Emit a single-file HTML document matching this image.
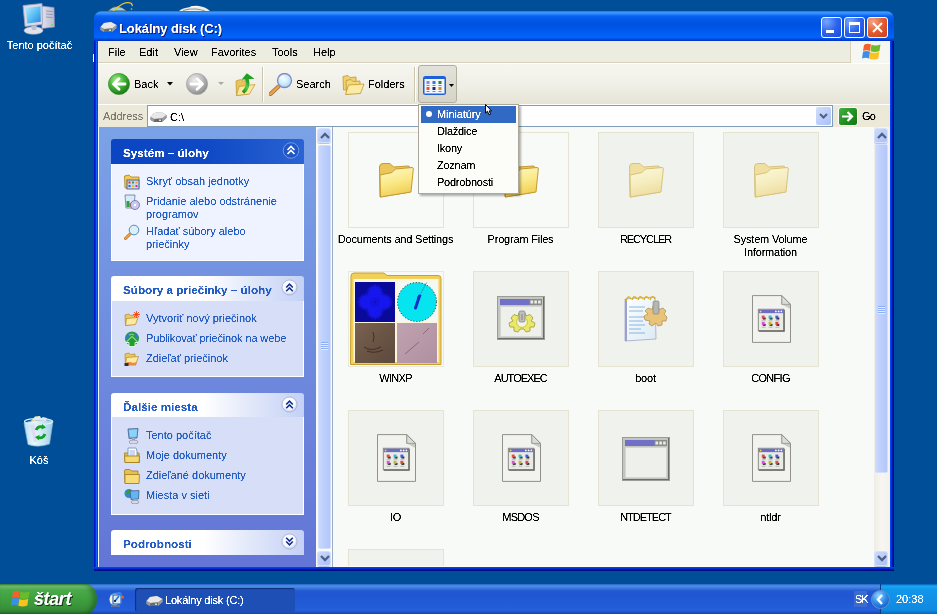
<!DOCTYPE html>
<html><head><meta charset="utf-8">
<style>
*{box-sizing:border-box;margin:0;padding:0}
html,body{width:937px;height:614px;overflow:hidden;background:#004E98;font-family:"Liberation Sans",sans-serif;font-size:11px;color:#000}
.a{position:absolute}
.t{white-space:nowrap}
.t,.lnk,.lbl,.dtxt{filter:url(#cr)}
#title{left:94px;top:11px;width:800px;height:30px;border-radius:8px 8px 0 0;background:linear-gradient(#1F6EF0 0,#3C96FF 1.5px,#2E86FC 3px,#0A62F0 5px,#0058E8 9px,#0051DF 45%,#005CF0 70%,#0064F8 88%,#0046D8 95%,#0030C0 100%)}
#frameL{left:94px;top:41px;width:4px;height:530px;background:linear-gradient(90deg,#0016C8 0,#0016C8 1px,#002EE0 1px,#002EE0 2px,#1460F2 2px,#1460F2 3px,#0046E6 3px)}
#frameR{left:890px;top:41px;width:4px;height:530px;background:linear-gradient(90deg,#0846F2 0,#0846F2 1px,#0030E4 1px,#0030E4 2px,#0018B0 2px,#0018B0 3px,#000A8C 3px)}
#frameB{left:94px;top:567px;width:800px;height:4px;background:linear-gradient(#0042F0 0,#0042F0 1px,#0030D8 1px,#0030D8 2px,#0016A8 2px,#0016A8 3px,#000A80 3px)}
#ttxt{left:119px;top:21px;letter-spacing:-0.1px;font-weight:bold;font-size:13px;color:#fff;text-shadow:1px 1px 0 #0A1E80}
.tb{top:17px;width:21px;height:21px;border:1px solid #fff;border-radius:3px;background:radial-gradient(circle at 25% 20%,#78A6FA,#2B63F0 50%,#1A4CD6)}
#menubar{left:98px;top:41px;width:792px;height:22px;background:#EDECE1;border-bottom:1px solid #D8D2BD}
#logoarea{left:850px;top:41px;width:40px;height:22px;background:#F6F7F3;border-left:1px solid #D8D2BD}
.mi{top:46px}
#toolbar{left:98px;top:63px;width:792px;height:41px;background:linear-gradient(#F6F6F0,#F0EFE6 55%,#E6E4D6);border-top:1px solid #fff}
#addr{left:98px;top:104px;width:792px;height:23px;background:#ECE9D8;border-top:1px solid #fff}
#addrbox{left:147px;top:105px;width:686px;height:22px;background:#fff;border:1px solid #7F9DB9}
#content{left:98px;top:127px;width:792px;height:440px;background:#F7FAF7}
#pane{left:98px;top:127px;width:218px;height:440px;background:linear-gradient(#7BA2E7,#6375D6)}
.sb{width:16px}
.sbbtn{width:14px;height:15px;border:1px solid #D4E0FC;border-radius:3px;box-shadow:0 1px 0 #B4C4E4;background:linear-gradient(135deg,#CCDAFC,#B7CAF9 60%,#A9BFF7)}
.thumb{width:13px;border:1px solid #D2DEFC;border-radius:2px;background:linear-gradient(90deg,#CAD8FC,#BCCEFB 50%,#B3C8F9)}
.ph{left:111px;width:193px;height:25px;border-radius:3px 3px 0 0;background:linear-gradient(90deg,#fff 0,#fff 48%,#E4EAFA 70%,#C4D1F6 100%)}
.ph .t{position:absolute;left:12px;top:7px;font-weight:bold;font-size:11.7px;color:#215DC6}
.pb{left:111px;width:193px;background:#D6DFF7;border:1px solid #fff;border-top:0}
.lnk{color:#215DC6;position:absolute;left:146px;line-height:13px}
.circ{width:17px;height:17px}
.box{width:96px;height:96px;background:#F0F2EE;border:1px solid #E6E3D2}
.lbl{width:125px;text-align:center;line-height:13px;letter-spacing:-0.2px}
#taskbar{left:0;top:584px;width:937px;height:30px;background:linear-gradient(#2A5EC8 0,#3A78DC 1px,#4C92E4 2px,#3C7CDC 4px,#2258D4 7px,#2156D2 40%,#2360DA 88%,#1E4EBE 95%,#1A42A8 100%)}
#start{left:0;top:584px;width:97px;height:30px;border-radius:0 11px 11px 0/0 15px 15px 0;background:linear-gradient(#3A8E3A 0,#74C374 2px,#4AAA4A 6px,#3FA03F 50%,#378E37 88%,#2A6E2A 100%);box-shadow:inset -4px 0 5px rgba(20,60,20,0.45)}
#tray{left:880px;top:584px;width:57px;height:30px;background:linear-gradient(#0C59B9 0,#18A8F2 2px,#1096EC 6px,#1290E8 50%,#0F89E0 88%,#0B65C0 100%);border-left:1px solid #0A3A9A}
.dtxt{color:#fff;text-align:center}
</style></head><body>
<svg width="0" height="0" style="position:absolute">
<defs>
 <filter id="cr" x="0" y="0" width="100%" height="100%"><feComponentTransfer><feFuncA type="linear" slope="2.6" intercept="-0.6"/></feComponentTransfer></filter>
 <linearGradient id="fgY" x1="0" y1="0" x2="0.3" y2="1"><stop offset="0" stop-color="#FEF8CC"/><stop offset="0.55" stop-color="#FAEA8A"/><stop offset="1" stop-color="#F0D058"/></linearGradient>
 <linearGradient id="fgP" x1="0" y1="0" x2="0.3" y2="1"><stop offset="0" stop-color="#FBF8DE"/><stop offset="0.55" stop-color="#F6EEC0"/><stop offset="1" stop-color="#EEDEA2"/></linearGradient>
 <symbol id="foldY" viewBox="0 0 36 36">
  <path d="M1.5 5 Q1.5 1.5 5 1.5 L12 1.5 L15.5 5 L30 4 Q32 4 32 6 L32 30 L2 35 Z" fill="#EBC65A" stroke="#C59B30" stroke-width="1"/>
  <path d="M2 13 L14 10.5 L17.5 7 L34 5.5 Q35.5 5.5 35.3 7 L33 30 L2.5 35 Z" fill="url(#fgY)" stroke="#C59B30" stroke-width="1"/>
 </symbol>
 <symbol id="foldP" viewBox="0 0 36 36">
  <path d="M1.5 5 Q1.5 1.5 5 1.5 L12 1.5 L15.5 5 L30 4 Q32 4 32 6 L32 30 L2 35 Z" fill="#EFDFA0" stroke="#D8C27A" stroke-width="1"/>
  <path d="M2 13 L14 10.5 L17.5 7 L34 5.5 Q35.5 5.5 35.3 7 L33 30 L2.5 35 Z" fill="url(#fgP)" stroke="#D8C27A" stroke-width="1"/>
 </symbol>
 <symbol id="doc" viewBox="0 0 40 49">
  <path d="M0.5 0.5 H30.5 L39.5 9.5 V48.5 H0.5 Z" fill="#F2F3EE" stroke="#8C8E87"/>
  <path d="M30.5 0.5 V9.5 H39.5 Z" fill="#DCDDD5" stroke="#8C8E87" stroke-linejoin="round"/>
  <path d="M31 10 L39 10 L39 14 Z" fill="#C8CAC2"/>
  <rect x="6.5" y="14.5" width="26" height="22" fill="#EAEBE5" stroke="#8A8B85"/>
  <path d="M33 15 V37 H7" stroke="#5E5F5A" stroke-width="1.2" fill="none"/>
  <rect x="7" y="15" width="25" height="3.5" fill="#6C6CC4"/>
  <rect x="8" y="16" width="1.6" height="1.6" fill="#F0E060"/>
  <circle cx="24.5" cy="16.8" r="0.9" fill="#fff"/><circle cx="27.3" cy="16.8" r="0.9" fill="#fff"/><circle cx="30.1" cy="16.8" r="0.9" fill="#fff"/>
  <g transform="translate(0,0)">
  <rect x="11" y="23" width="3" height="2" fill="#202020"/><rect x="18" y="23" width="3" height="2" fill="#202020"/><rect x="25" y="23" width="3" height="2" fill="#202020"/>
  <rect x="11" y="29.5" width="3" height="2" fill="#202020"/><rect x="18" y="29.5" width="3" height="2" fill="#202020"/><rect x="25" y="29.5" width="3" height="2" fill="#202020"/>
  <rect x="10" y="21" width="3" height="3" fill="#E84848"/><rect x="17" y="21" width="3" height="3" fill="#38B8C8"/><rect x="24" y="21" width="3" height="3" fill="#4A5AE0"/>
  <rect x="10" y="27.5" width="3" height="3" fill="#E050D8"/><rect x="17" y="27.5" width="3" height="3" fill="#C0B838"/><rect x="24" y="27.5" width="3" height="3" fill="#E04848"/>
  <rect x="10" y="26" width="4" height="0.8" fill="#A8A8A8"/><rect x="17" y="26" width="4" height="0.8" fill="#A8A8A8"/><rect x="24" y="26" width="4" height="0.8" fill="#A8A8A8"/>
  <rect x="10" y="32.5" width="4" height="0.8" fill="#A8A8A8"/><rect x="17" y="32.5" width="4" height="0.8" fill="#A8A8A8"/><rect x="24" y="32.5" width="4" height="0.8" fill="#A8A8A8"/>
  </g>
 </symbol>
 <symbol id="appw" viewBox="0 0 48 44">
  <rect x="0" y="0" width="48" height="44" fill="#C3C5BE"/>
  <path d="M0 0 H48 V44 H0 Z M1 1 V43 H47 V1 Z" fill="#9A9C95"/>
  <path d="M47 1 V43 H1 V42 H46 V1 Z" fill="#6C6D68"/>
  <rect x="3" y="3" width="42" height="6" fill="#7070C8"/>
  <rect x="32.5" y="3" width="12.5" height="6" fill="#8C8C88"/>
  <rect x="33.5" y="4.5" width="2.6" height="3" fill="#ECECE8"/><rect x="37.3" y="4.5" width="2.6" height="3" fill="#ECECE8"/><rect x="41.1" y="4.5" width="2.6" height="3" fill="#ECECE8"/>
  <rect x="3" y="10" width="42" height="31" fill="#D4D6CF"/>
  <rect x="4" y="11" width="40" height="29" fill="#EEF0EB"/>
 </symbol>
</defs>
</svg>
<!-- desktop icons -->
<svg class="a" style="left:22px;top:3px" width="34" height="32" viewBox="0 0 34 32">
 <defs><linearGradient id="scr" x1="0" y1="0" x2="1" y2="1"><stop offset="0" stop-color="#B4ECFF"/><stop offset="0.5" stop-color="#5CC0F4"/><stop offset="1" stop-color="#2A86E0"/></linearGradient>
 <linearGradient id="twr" x1="0" y1="0" x2="1" y2="0"><stop offset="0" stop-color="#E4E4F0"/><stop offset="1" stop-color="#B8B8D0"/></linearGradient></defs>
 <path d="M19 3 L32 4.5 L32.5 24 L20 25.5 Z" fill="url(#twr)" stroke="#9494B4" stroke-width="0.7"/>
 <path d="M24 8 L30.5 8.5 M24 11 L30.5 11.5 M24 14 L30.5 14.5" stroke="#8A8CA8" stroke-width="0.8"/>
 <rect x="29.5" y="21" width="1.6" height="1.6" fill="#58E058"/>
 <ellipse cx="11.5" cy="27.5" rx="9.5" ry="3.8" fill="#E2E2EA" stroke="#A6A6BC" stroke-width="0.6"/>
 <path d="M9 21 L15 21 L14 27 L10 27 Z" fill="#BEBED2"/>
 <path d="M1 2.5 L20 0.5 L20.5 21.5 L3 23.5 Z" fill="#DADAE8" stroke="#9C9CB8" stroke-width="0.8"/>
 <path d="M3.8 5 L18.5 3.3 L18.8 18.8 L5.3 20.5 Z" fill="url(#scr)"/>
</svg>
<div class="a t dtxt" style="left:0;top:39px;width:79px">Tento počítač</div>
<svg class="a" style="left:23px;top:415px" width="31" height="32" viewBox="0 0 31 32">
 <defs><linearGradient id="rb" x1="0" y1="0" x2="1" y2="0"><stop offset="0" stop-color="#B8DDF2"/><stop offset="0.35" stop-color="#EAF6FC"/><stop offset="0.7" stop-color="#C4E4F4"/><stop offset="1" stop-color="#9CCAE4"/></linearGradient></defs>
 <path d="M1 8 Q15 3 30 6 L26.5 29 Q15 33 5 29.5 Z" fill="url(#rb)" stroke="#8AB4CC" stroke-width="0.7"/>
 <path d="M8 6 L12 1.5 L17 1 L19 5 Z" fill="#F8ECB0"/>
 <path d="M16 5 L20 2 L24 3 L23 6 Z" fill="#E8E0F8"/>
 <path d="M7 10 Q9 20 11 27 L14 26.5 Q12 18 11.5 8 Z" fill="#DCDCF2"/>
 <ellipse cx="15.5" cy="6.5" rx="14" ry="3" fill="none" stroke="#D8EEF8" stroke-width="1.2"/>
 <path d="M13 15 Q15 10.5 20 12" stroke="#14A020" stroke-width="2.8" fill="none"/>
 <path d="M19 9 L23 12.5 L18.5 14.5 Z" fill="#14A020"/>
 <path d="M22 19 Q20 24 15 22.5" stroke="#14A020" stroke-width="2.8" fill="none"/>
 <path d="M16 25.5 L12 22 L16.5 20 Z" fill="#14A020"/>
</svg>
<div class="a t dtxt" style="left:0;top:454px;width:78px">Kôš</div>
<svg class="a" style="left:105px;top:0px" width="32" height="11" viewBox="0 0 32 11">
 <path d="M2.5 11 Q12 1.5 22 11 Z" fill="#9CCCD6" stroke="#2A3A5A" stroke-width="0.8"/>
 <path d="M8 11 Q13 6.5 17.5 4 Q23 1.5 26.5 3.5 L27.5 6" stroke="#F2C424" stroke-width="1.3" fill="none"/>
 <circle cx="26.5" cy="9" r="0.8" fill="#F2C424"/>
</svg>
<svg class="a" style="left:179px;top:5px" width="32" height="6" viewBox="0 0 32 6">
 <path d="M0 6 Q3 3 9 2.5 Q14 0 20 1 Q27 2 31 6 Z" fill="#EDEDEA"/>
 <path d="M4 5.5 Q10 3.5 17 4 Q22 4.5 26 6" stroke="#909090" stroke-width="1" fill="none"/>
 <path d="M12 2 Q16 1 20 1.8" stroke="#FFFFFF" stroke-width="1" fill="none"/>
</svg>

<div class="a" style="left:93px;top:54px;width:1px;height:8px;background:#fff"></div>
<!-- window chrome -->
<div id="title" class="a"></div>
<div id="frameL" class="a"></div>
<div id="frameR" class="a"></div>
<div id="frameB" class="a"></div>
<svg class="a" style="left:100px;top:21px" width="17" height="12" viewBox="0 0 17 12">
 <path d="M0.5 6 L4 2 L11 1 L16.5 4 L16.5 7 L12 11 L4 11 L0.5 9 Z" fill="#8C8C8C"/>
 <path d="M0.5 6 L4 2 L11 1 L16.5 4 L12 7.5 L4.5 8 Z" fill="#E8E8E8"/>
 <path d="M0.5 6 L4.5 8 L12 7.5 L16.5 4 L16.5 7 L12 11 L4 11 L0.5 9 Z" fill="#9A9A9A"/>
 <path d="M4.5 8 L12 7.5 L12 11 L4 11 Z" fill="#6A6A6A"/>
 <rect x="9" y="8.5" width="2" height="1.5" fill="#C8E8C8"/>
</svg>
<div id="ttxt" class="a t">Lokálny disk (C:)</div>
<div class="a tb" style="left:821px"><div class="a" style="left:4px;top:12px;width:8px;height:3px;background:#fff"></div></div>
<div class="a tb" style="left:844px"><div class="a" style="left:4px;top:4px;width:11px;height:11px;border:1px solid #fff;border-top-width:3px"></div></div>
<div class="a tb" style="left:867px;background:radial-gradient(circle at 25% 20%,#F5A48A,#E25C30 50%,#C63E18)">
 <svg class="a" style="left:0;top:0" width="19" height="19" viewBox="0 0 19 19"><path d="M5 5 L14 14 M14 5 L5 14" stroke="#fff" stroke-width="2"/></svg>
</div>

<div id="menubar" class="a"></div>
<div id="logoarea" class="a"></div>
<svg class="a" style="left:861px;top:43px" width="20" height="18" viewBox="0 0 20 18">
 <path d="M3 2 Q6 0 10 1.5 L9 8 Q5.5 6.5 2 8 Z" fill="#F4622A"/>
 <path d="M10.5 1.8 Q14.5 3.5 19.5 1.5 L18.5 8 Q14 10 9.5 8.3 Z" fill="#6CBB2C"/>
 <path d="M2 8.8 Q5.5 7.3 9 8.8 L8 15.5 Q4.5 14 1 15.5 Z" fill="#3C8EE8"/>
 <path d="M9.3 9 Q14 10.8 18.3 8.8 L17.3 15.5 Q13 17.5 8.3 15.8 Z" fill="#F9C21E"/>
</svg>
<div class="a t mi" style="left:108px">File</div>
<div class="a t mi" style="left:139px">Edit</div>
<div class="a t mi" style="left:174px">View</div>
<div class="a t mi" style="left:211px">Favorites</div>
<div class="a t mi" style="left:272px">Tools</div>
<div class="a t mi" style="left:313px">Help</div>

<div id="toolbar" class="a"></div>
<svg class="a" style="left:108px;top:73px" width="22" height="22" viewBox="0 0 22 22">
 <defs><radialGradient id="gg" cx="38%" cy="32%" r="68%"><stop offset="0" stop-color="#B4EFA0"/><stop offset="0.5" stop-color="#46B838"/><stop offset="1" stop-color="#1B7A18"/></radialGradient></defs>
 <circle cx="11" cy="11" r="10.6" fill="url(#gg)" stroke="#2A8A22" stroke-width="0.6"/>
 <path d="M17 11 H6 M11 5.8 L5.5 11 L11 16.2" stroke="#fff" stroke-width="2.8" fill="none" stroke-linecap="round" stroke-linejoin="round"/>
</svg>
<div class="a t" style="left:134px;top:78px">Back</div>
<svg class="a" style="left:167px;top:82px" width="6" height="4"><path d="M0 0 H6 L3 3.5 Z" fill="#000"/></svg>
<svg class="a" style="left:186px;top:73px" width="22" height="22" viewBox="0 0 22 22">
 <defs><radialGradient id="gr" cx="38%" cy="32%" r="68%"><stop offset="0" stop-color="#EEEEEE"/><stop offset="0.5" stop-color="#C2C2C2"/><stop offset="1" stop-color="#8E8E8E"/></radialGradient></defs>
 <circle cx="11" cy="11" r="10.6" fill="url(#gr)" stroke="#999" stroke-width="0.6"/>
 <path d="M5 11 H16 M11 5.8 L16.5 11 L11 16.2" stroke="#fff" stroke-width="2.8" fill="none" stroke-linecap="round" stroke-linejoin="round"/>
</svg>
<svg class="a" style="left:218px;top:82px" width="6" height="3"><path d="M0 0 H6 L3 3 Z" fill="#A8A8A8"/></svg>
<svg class="a" style="left:235px;top:73px" width="24" height="23" viewBox="0 0 24 23">
 <defs><linearGradient id="ua" x1="0" y1="1" x2="0.3" y2="0"><stop offset="0" stop-color="#1E8A1E"/><stop offset="0.6" stop-color="#5CC84A"/><stop offset="1" stop-color="#2AA02A"/></linearGradient></defs>
 <path d="M1 8 L5.5 6.5 L8 8 L13.5 7.5 L13.5 21 L1.5 22.5 Z" fill="#E9C45A" stroke="#C09530" stroke-width="0.7"/>
 <path d="M4 13.5 L20 11.5 L14.5 21 L1.5 22.5 Z" fill="#F9E89E" stroke="#C09530" stroke-width="0.7"/>
 <path d="M8 19.5 Q14.5 14 11.8 5.5" stroke="url(#ua)" stroke-width="3.6" fill="none"/>
 <path d="M6.5 6.8 L11.8 0.3 L19.5 5.8 Z" fill="#22A024"/>
</svg>
<div class="a" style="left:262px;top:67px;width:1px;height:35px;background:#CDC6AE;box-shadow:1px 0 0 #fff"></div>
<svg class="a" style="left:269px;top:73px" width="24" height="23" viewBox="0 0 24 23">
 <defs><radialGradient id="lens" cx="45%" cy="40%" r="60%"><stop offset="0" stop-color="#F4FCFF"/><stop offset="0.5" stop-color="#D2EEFC"/><stop offset="1" stop-color="#A8D4F2"/></radialGradient></defs>
 <path d="M1.5 21 L9.5 13.5" stroke="#8C6A40" stroke-width="4" stroke-linecap="round"/>
 <path d="M1.5 21 L9.5 13.5" stroke="#F0A044" stroke-width="2.6" stroke-linecap="round"/>
 <circle cx="15.5" cy="7.5" r="7" fill="url(#lens)" stroke="#8088C4" stroke-width="1.3"/>
 <path d="M11.5 6 Q12.5 3.5 15 3" stroke="#fff" stroke-width="1.2" fill="none"/>
</svg>
<div class="a t" style="left:296px;top:78px">Search</div>
<svg class="a" style="left:342px;top:74px" width="23" height="21" viewBox="0 0 23 21">
 <path d="M1 2.5 L6 1.5 L8 3.5 L14 3 L14 15 L1.5 16 Z" fill="#F0D070" stroke="#BF9830" stroke-width="0.8"/>
 <path d="M4 6.5 L9 5.5 L11 7.5 L18 7 L18 19 L4.5 20 Z" fill="#F4D878" stroke="#BF9830" stroke-width="0.8"/>
 <path d="M6.5 11 L22 10 L18.5 19.5 L3.5 20.5 Z" fill="#FCEBA2" stroke="#BF9830" stroke-width="0.8"/>
</svg>
<div class="a t" style="left:368px;top:78px">Folders</div>
<div class="a" style="left:414px;top:67px;width:1px;height:35px;background:#CDC6AE;box-shadow:1px 0 0 #fff"></div>
<div class="a" style="left:418px;top:65px;width:39px;height:38px;border:1px solid #B4B0A0;border-radius:3px;background:linear-gradient(#E2E2DA,#DCDBD0 50%,#D6D4C8)"></div>
<svg class="a" style="left:423px;top:76px" width="24" height="20" viewBox="0 0 24 20">
 <rect x="0" y="0" width="23" height="19" rx="2.5" fill="#1F5FD8"/>
 <rect x="1.5" y="3" width="20" height="14.5" fill="#F4F6FA"/>
 <rect x="3.5" y="5" width="3" height="3" fill="#8A8AC8"/><rect x="9.5" y="5" width="3" height="3" fill="#2A7AE8"/><rect x="15.5" y="5" width="3" height="3" fill="#1A8A2A"/>
 <rect x="3.5" y="9" width="3" height="1" fill="#888"/><rect x="9.5" y="9" width="3" height="1" fill="#888"/><rect x="15.5" y="9" width="3" height="1" fill="#888"/>
 <rect x="3.5" y="11" width="3" height="3" fill="#F0502A"/><rect x="9.5" y="11" width="3" height="3" fill="#202880"/><rect x="15.5" y="11" width="3" height="3" fill="#C89028"/>
 <rect x="3.5" y="15" width="3" height="1" fill="#888"/><rect x="9.5" y="15" width="3" height="1" fill="#888"/><rect x="15.5" y="15" width="3" height="1" fill="#888"/>
</svg>
<svg class="a" style="left:449px;top:84px" width="5" height="3"><path d="M0 0 H5 L2.5 3 Z" fill="#000"/></svg>

<!-- address bar -->
<div id="addr" class="a"></div>
<div class="a t" style="left:103px;top:110px;color:#7E7C72">Address</div>
<div id="addrbox" class="a"></div>
<svg class="a" style="left:150px;top:111px" width="17" height="12" viewBox="0 0 17 12">
 <path d="M0.5 6 L4 2 L11 1 L16.5 4 L16.5 7 L12 11 L4 11 L0.5 9 Z" fill="#8C8C8C"/>
 <path d="M0.5 6 L4 2 L11 1 L16.5 4 L12 7.5 L4.5 8 Z" fill="#E8E8E8"/>
 <path d="M0.5 6 L4.5 8 L12 7.5 L16.5 4 L16.5 7 L12 11 L4 11 L0.5 9 Z" fill="#9A9A9A"/>
 <path d="M4.5 8 L12 7.5 L12 11 L4 11 Z" fill="#6A6A6A"/>
 <rect x="9" y="8.5" width="2" height="1.5" fill="#C8E8C8"/>
</svg>
<div class="a t" style="left:170px;top:111px">C:\</div>
<div class="a" style="left:816px;top:107px;width:15px;height:18px;border-radius:2px;background:linear-gradient(135deg,#D2DEFC,#BACCF9 60%,#ABC0F7)"></div>
<svg class="a" style="left:819px;top:113px" width="9" height="6"><path d="M1 1 L4.5 4.5 L8 1" stroke="#4D6185" stroke-width="2" fill="none"/></svg>
<div class="a" style="left:838px;top:107px;width:20px;height:19px;border-radius:3px;background:linear-gradient(135deg,#46B246,#1F901F 55%,#137513);border:1px solid #fff"></div>
<svg class="a" style="left:838px;top:107px" width="19" height="19" viewBox="0 0 19 19"><path d="M4 9.5 H14 M9.5 5 L14 9.5 L9.5 14" stroke="#fff" stroke-width="2.2" fill="none"/></svg>
<div class="a t" style="left:862px;top:110px;letter-spacing:-0.8px">Go</div>
<!-- content -->
<div id="content" class="a"></div>
<div id="pane" class="a"></div>
<div class="a" style="left:98px;top:127px;width:1px;height:440px;background:#F4F8FF"></div>

<!-- pane scrollbar -->
<div class="a sb" style="left:316px;top:127px;height:440px;background:#FBFBF4"></div>
<div class="a sbbtn" style="left:317px;top:128px"></div>
<svg class="a" style="left:320px;top:132px" width="10" height="7"><path d="M1 6 L5 2 L9 6" stroke="#4D6185" stroke-width="2.3" fill="none"/></svg>
<div class="a thumb" style="left:318px;top:145px;height:404px"></div>
<div class="a" style="left:321px;top:342px;width:7px;height:8px;background:repeating-linear-gradient(#8CB0F8 0,#8CB0F8 1px,#E5EDFD 1px,#E5EDFD 2px)"></div>
<div class="a sbbtn" style="left:317px;top:551px"></div>
<svg class="a" style="left:320px;top:555px" width="10" height="7"><path d="M1 1 L5 5 L9 1" stroke="#4D6185" stroke-width="2.3" fill="none"/></svg>
<div class="a" style="left:332px;top:127px;width:1px;height:440px;background:#98AEC8"></div>

<!-- panel 1 -->
<div class="a ph" style="top:139px;background:linear-gradient(90deg,#0C45C2,#0F49C5 50%,#2A63D3)"><div class="t" style="color:#fff">Systém – úlohy</div></div>
<svg class="a" style="left:282px;top:142px" width="18" height="18" viewBox="0 0 18 18">
 <circle cx="9" cy="8.5" r="7.8" fill="#2256C6" stroke="#6F98E4" stroke-width="1"/>
 <path d="M5.5 8 L9 4.5 L12.5 8 M5.5 12 L9 8.5 L12.5 12" stroke="#fff" stroke-width="1.6" fill="none"/>
</svg>
<div class="a pb" style="top:164px;height:97px;background:#EFF3FF"></div>
<svg class="a" style="left:124px;top:174px" width="16" height="16" viewBox="0 0 16 16">
 <path d="M0.5 2 L5 1 L7 3 L15 3 L15 14 L1 14 Z" fill="#F0CB5A" stroke="#A8801C" stroke-width="0.8"/>
 <rect x="3" y="6" width="12" height="9" fill="#C8D8F0" stroke="#3A4A6A" stroke-width="0.8"/>
 <rect x="4.5" y="7.5" width="2" height="2" fill="#E03030"/><rect x="8" y="7.5" width="2" height="2" fill="#30A040"/><rect x="11.5" y="7.5" width="2" height="2" fill="#F0A020"/>
 <rect x="4.5" y="11" width="2" height="2" fill="#3060E0"/><rect x="8" y="11" width="2" height="2" fill="#E0C020"/><rect x="11.5" y="11" width="2" height="2" fill="#D03090"/>
</svg>
<div class="a t lnk" style="top:175px">Skryť obsah jednotky</div>
<svg class="a" style="left:124px;top:194px" width="16" height="16" viewBox="0 0 16 16">
 <path d="M1 1 L11 1 L10 14 L2 14 Z" fill="#D6ECF8" stroke="#6A7A90" stroke-width="0.8"/>
 <rect x="2.5" y="7" width="3" height="6" fill="#2EA040"/><rect x="5.5" y="9" width="3" height="4" fill="#E04A20"/>
 <circle cx="11" cy="11" r="4.5" fill="#C8C8F0" stroke="#6A6A9A" stroke-width="0.8"/>
 <circle cx="11" cy="11" r="1.2" fill="#fff"/>
</svg>
<div class="a lnk" style="top:195px;width:150px">Pridanie alebo odstránenie<br>programov</div>
<svg class="a" style="left:124px;top:224px" width="16" height="16" viewBox="0 0 16 16">
 <path d="M1.5 14.5 L6 10" stroke="#C0701E" stroke-width="3" stroke-linecap="round"/>
 <path d="M1.5 14.5 L6 10" stroke="#F0A848" stroke-width="1.6" stroke-linecap="round"/>
 <circle cx="10" cy="6" r="4.8" fill="#D8F0FC" stroke="#5A8CB8" stroke-width="1"/>
</svg>
<div class="a lnk" style="top:225px;width:150px">Hľadať súbory alebo<br>priečinky</div>

<!-- panel 2 -->
<div class="a ph" style="top:276px"><div class="t">Súbory a priečinky – úlohy</div></div>
<svg class="a circ" style="left:281px;top:279px" width="18" height="18" viewBox="0 0 18 18">
 <defs><radialGradient id="cw" cx="45%" cy="40%" r="60%"><stop offset="0" stop-color="#fff"/><stop offset="0.65" stop-color="#FAFBFF"/><stop offset="1" stop-color="#C0CCEA"/></radialGradient></defs>
 <circle cx="9" cy="9" r="8" fill="url(#cw)" stroke="#A8B2D4" stroke-width="1"/>
 <path d="M5.5 9 L9 5.5 L12.5 9 M5.5 13 L9 9.5 L12.5 13" stroke="#0E2E98" stroke-width="1.7" fill="none"/>
</svg>
<div class="a pb" style="top:301px;height:76px"></div>
<svg class="a" style="left:124px;top:311px" width="16" height="16" viewBox="0 0 16 16">
 <path d="M1 4 L5 3 L6.5 4.5 L11 4 L11 13 L1.5 14.5 Z" fill="#EBC860" stroke="#B08A2A" stroke-width="0.7"/>
 <path d="M2.5 7.5 L14 6.5 L11.5 13.5 L1.5 14.5 Z" fill="#FBEAA0" stroke="#B08A2A" stroke-width="0.7"/>
 <circle cx="12.5" cy="3.5" r="2" fill="#F8B020"/>
 <path d="M12.5 0 V7 M9 3.5 H16 M10 1 L15 6 M15 1 L10 6" stroke="#F04010" stroke-width="0.8"/>
</svg>
<div class="a t lnk" style="top:312px">Vytvoriť nový priečinok</div>
<svg class="a" style="left:124px;top:331px" width="16" height="16" viewBox="0 0 16 16">
 <circle cx="8" cy="7.5" r="7" fill="#2F9E3A"/>
 <path d="M1.5 9 Q2 4 5 2 Q5.5 5 3.5 9 Z" fill="#2E7AD8"/>
 <path d="M10 1.5 Q14 3 14.8 7 Q12 8 11 5 Z" fill="#2E7AD8"/>
 <path d="M5 4 Q8 2.5 10 4" stroke="#8AD890" stroke-width="1" fill="none"/>
 <path d="M2 11.5 L8 5.5 L14 11.5 L11 11.5 L11 15.5 L5 15.5 L5 11.5 Z" fill="#1CA02A" stroke="#E8F8E8" stroke-width="0.9"/>
</svg>
<div class="a t lnk" style="top:332px;letter-spacing:-0.12px">Publikovať priečinok na webe</div>
<svg class="a" style="left:124px;top:351px" width="16" height="16" viewBox="0 0 16 16">
 <path d="M1 3 L5 2 L6.5 3.5 L11 3 L11 12 L1.5 13.5 Z" fill="#EBC860" stroke="#B08A2A" stroke-width="0.7"/>
 <path d="M2.5 6.5 L14.5 5.5 L12 12.5 L1.5 13.5 Z" fill="#FBEAA0" stroke="#B08A2A" stroke-width="0.7"/>
 <path d="M1 12.5 Q5 10 9 12 L13 11 L12 14.5 L1 14.5 Z" fill="#E88A40"/>
 <rect x="0.5" y="12" width="4" height="3" fill="#303030"/>
</svg>
<div class="a t lnk" style="top:352px">Zdieľať priečinok</div>

<!-- panel 3 -->
<div class="a ph" style="top:393px"><div class="t">Ďalšie miesta</div></div>
<svg class="a circ" style="left:281px;top:396px" width="18" height="18" viewBox="0 0 18 18">
 <circle cx="9" cy="9" r="8" fill="url(#cw)" stroke="#A8B2D4" stroke-width="1"/>
 <path d="M5.5 9 L9 5.5 L12.5 9 M5.5 13 L9 9.5 L12.5 13" stroke="#0E2E98" stroke-width="1.7" fill="none"/>
</svg>
<div class="a pb" style="top:417px;height:98px"></div>
<svg class="a" style="left:124px;top:428px" width="16" height="16" viewBox="0 0 16 16">
 <path d="M4 1 L14 0.5 L13 10 L5 10.5 Z" fill="#5EB8F0" stroke="#4A5A8A" stroke-width="0.8"/>
 <path d="M5 2 L13 1.5 L12.5 8.5 L6 9 Z" fill="#8AD4FA"/>
 <rect x="8" y="10" width="3" height="3" fill="#A8A8C0"/>
 <ellipse cx="9.5" cy="14" rx="4.5" ry="2" fill="#D8D8E8" stroke="#7A7A9A" stroke-width="0.6"/>
</svg>
<div class="a t lnk" style="top:429px">Tento počítač</div>
<svg class="a" style="left:124px;top:447px" width="16" height="16" viewBox="0 0 16 16">
 <path d="M0.5 6 L15 6 L15.5 15.5 L1 15.5 Z" fill="#E8C050" stroke="#A07A20" stroke-width="0.8"/>
 <path d="M4 1 L12 1 L13 4 L13 11 L4 11 Z" fill="#F8FAFF" stroke="#6A8AB8" stroke-width="0.8"/>
 <path d="M5.5 4 H11 M5.5 6 H11 M5.5 8 H11" stroke="#7A9AD0" stroke-width="0.7"/>
 <path d="M0.5 9 L15.5 9 L15 15.5 L1 15.5 Z" fill="#F4D870" stroke="#A07A20" stroke-width="0.8"/>
</svg>
<div class="a t lnk" style="top:449px">Moje dokumenty</div>
<svg class="a" style="left:124px;top:469px" width="16" height="15" viewBox="0 0 16 15">
 <path d="M0.5 2 Q0.5 0.5 2 0.5 L6 0.5 L7.5 2 L14 2 L14 14 L1 14 Z" fill="#E8C050" stroke="#A07A20" stroke-width="0.8"/>
 <path d="M1 5.5 L15.5 5.5 L15 14.5 L1 14.5 Z" fill="#F8DC78" stroke="#A07A20" stroke-width="0.8"/>
</svg>
<div class="a t lnk" style="top:469px">Zdieľané dokumenty</div>
<svg class="a" style="left:124px;top:488px" width="16" height="16" viewBox="0 0 16 16">
 <circle cx="5" cy="5.5" r="4.5" fill="#2E8AD8"/>
 <path d="M1.5 4 Q4 1 7 2 Q6 5 3 7 Z" fill="#30A040"/>
 <path d="M6 3 L15 2.5 L14.5 11 L7 11.5 Z" fill="#5EB8F0" stroke="#4A5A8A" stroke-width="0.8"/>
 <rect x="9.5" y="11" width="3" height="2" fill="#A8A8C0"/>
 <ellipse cx="11" cy="14" rx="4" ry="1.8" fill="#D8D8E8" stroke="#7A7A9A" stroke-width="0.6"/>
</svg>
<div class="a t lnk" style="top:489px">Miesta v sieti</div>

<!-- panel 4 -->
<div class="a ph" style="top:530px"><div class="t">Podrobnosti</div></div>
<svg class="a circ" style="left:281px;top:533px" width="18" height="18" viewBox="0 0 18 18">
 <circle cx="9" cy="9" r="8" fill="url(#cw)" stroke="#A8B2D4" stroke-width="1"/>
 <path d="M5.5 5 L9 8.5 L12.5 5 M5.5 9 L9 12.5 L12.5 9" stroke="#0E2E98" stroke-width="1.7" fill="none"/>
</svg>
<!-- file grid -->
<div class="a box" style="left:348px;top:132px;background:transparent"></div>
<div class="a box" style="left:473px;top:132px;background:transparent"></div>
<div class="a box" style="left:598px;top:132px"></div>
<div class="a box" style="left:723px;top:132px"></div>
<div class="a box" style="left:348px;top:271px;background:transparent;border-color:#EAE8DA"></div>
<div class="a box" style="left:473px;top:271px"></div>
<div class="a box" style="left:598px;top:271px"></div>
<div class="a box" style="left:723px;top:271px"></div>
<div class="a box" style="left:348px;top:410px"></div>
<div class="a box" style="left:473px;top:410px"></div>
<div class="a box" style="left:598px;top:410px"></div>
<div class="a box" style="left:723px;top:410px"></div>
<div class="a box" style="left:348px;top:549px;height:18px;border-bottom:0"></div>

<svg class="a" style="left:378px;top:162px" width="36" height="36"><use href="#foldY"/></svg>
<svg class="a" style="left:503px;top:162px" width="36" height="36"><use href="#foldY"/></svg>
<svg class="a" style="left:628px;top:162px" width="36" height="36"><use href="#foldP"/></svg>
<svg class="a" style="left:753px;top:162px" width="36" height="36"><use href="#foldP"/></svg>

<!-- WINXP thumbnail folder -->
<svg class="a" style="left:349px;top:272px" width="94" height="94" viewBox="0 0 94 94">
 <defs>
  <radialGradient id="blu" cx="50%" cy="50%" r="50%"><stop offset="0" stop-color="#1A1AF8"/><stop offset="0.6" stop-color="#1414D8"/><stop offset="1" stop-color="#0A0A9A"/></radialGradient>
  <linearGradient id="brn" x1="0" y1="0" x2="1" y2="1"><stop offset="0" stop-color="#7A6250"/><stop offset="0.5" stop-color="#6A5444"/><stop offset="1" stop-color="#5C4A3E"/></linearGradient>
  <linearGradient id="pnk" x1="0" y1="0" x2="1" y2="1"><stop offset="0" stop-color="#BFA2B0"/><stop offset="1" stop-color="#B090A0"/></linearGradient>
 </defs>
 <path d="M2 4 Q2 1 5 1 L35 1 L38 3.5 L89 3.5 Q92 3.5 92 6.5 L92 92.5 L1.5 92.5 Z" fill="#F2CF58" stroke="#C8A030" stroke-width="1"/>
 <rect x="4.5" y="7" width="85" height="83" fill="#FBF6DE"/>
 <rect x="6" y="10" width="40" height="40" fill="#0A0A98"/>
 <filter id="bl" x="-20%" y="-20%" width="140%" height="140%"><feGaussianBlur stdDeviation="1.6"/></filter>
 <g fill="#1818EE" filter="url(#bl)"><circle cx="26" cy="21" r="7.5"/><circle cx="26" cy="39" r="7.5"/><circle cx="17" cy="30" r="7.5"/><circle cx="35" cy="30" r="7.5"/><circle cx="26" cy="30" r="8"/></g>
 <g fill="#1010C8" filter="url(#bl)"><circle cx="26" cy="30" r="3"/></g>
 <rect x="48" y="10" width="40" height="40" fill="#F4F8F4"/>
 <circle cx="68" cy="30" r="19.5" fill="#06E4F0" stroke="#101010" stroke-width="0.8" stroke-dasharray="1.2 1.8"/>
 <path d="M66.5 36 L70.5 24" stroke="#1030C8" stroke-width="3" stroke-linecap="round"/>
 <path d="M68.5 26 L72 23" stroke="#1030C8" stroke-width="2"/>
 <path d="M72 21 L78 10" stroke="#303050" stroke-width="0.7" stroke-dasharray="1 1"/>
 <rect x="6" y="51" width="40" height="40" fill="url(#brn)"/>
 <path d="M15 75 Q22 80 32 75 M18 79 Q25 82 34 78 M24 60 Q26 65 24 70" stroke="#2A2018" stroke-width="0.7" fill="none"/>
 <rect x="48" y="51" width="40" height="40" fill="url(#pnk)"/>
 <path d="M56 82 L70 70 M74 62 L80 56" stroke="#8A6A7A" stroke-width="1" fill="none"/>
</svg>

<!-- AUTOEXEC -->
<svg class="a" style="left:497px;top:296px" width="48" height="44"><use href="#appw"/></svg>
<svg class="a" style="left:508px;top:309px" width="28" height="25" viewBox="0 0 28 25">
 <path d="M11 4 L17 4 L18 7 L22 5.5 L25 9 L23 12 L27 14 L26 18 L22 18 L22 22 L18 23 L16 20 L12 20 L10 23 L6 22 L6 18 L2 18 L1 14 L5 12 L3 9 L6 5.5 L10 7 Z" fill="#EAE86A" stroke="#A8A040" stroke-width="0.9"/>
 <circle cx="14" cy="13" r="5.5" fill="none" stroke="#C8C050" stroke-width="0.8"/><circle cx="14" cy="13" r="4.6" fill="#F2F3EC"/>
 <rect x="11" y="2" width="6" height="11" rx="1.5" fill="#BDBFB8" stroke="#7C7E78" stroke-width="0.7"/>
 <rect x="13.5" y="5" width="1" height="6" fill="#888"/>
</svg>

<!-- boot -->
<svg class="a" style="left:623px;top:294px" width="46" height="48" viewBox="0 0 46 48">
 <defs><linearGradient id="nb" x1="0" y1="0" x2="1" y2="1"><stop offset="0" stop-color="#FFFFFF"/><stop offset="1" stop-color="#DCEAF4"/></linearGradient></defs>
 <path d="M2 5 L32 3 L33 45 L2 47 Z" fill="url(#nb)" stroke="#A0A8C8" stroke-width="0.8"/>
 <path d="M2 5 L2 47 L4 47 L4 5 Z" fill="#9AA0D0"/>
 <path d="M6 13 H22 M6 17 H20 M6 23 H22 M6 27 H20 M6 31 H22 M6 35 H18 M6 39 H22" stroke="#7AB0E0" stroke-width="0.9"/>
 <path d="M3 7 Q5 0 8 5 M9 6 Q11 0 14 5 M15 6 Q17 0 20 5 M21 6 Q23 0 26 5 M27 6 Q29 0 32 5" stroke="#D8B030" stroke-width="1.4" fill="none"/>
 <path d="M30 12 L35 12 L36 15.5 L40 14 L43 17 L41 20 L44 23 L43 27 L39 27 L39 31 L35 32 L33 29 L29 32 L26 30 L27 27 L22 26 L21 22 L25 20 L22 17 L25 14 L29 15.5 Z" fill="#E8C47A" stroke="#B89050" stroke-width="0.8"/>
 <rect x="30" y="7" width="6" height="13" rx="1.2" fill="#B4B6B2" stroke="#7C7E7A" stroke-width="0.6"/>
</svg>

<svg class="a" style="left:752px;top:295px" width="39" height="48" viewBox="0 0 40 49"><use href="#doc" width="40" height="49"/></svg>
<svg class="a" style="left:377px;top:434px" width="39" height="48" viewBox="0 0 40 49"><use href="#doc" width="40" height="49"/></svg>
<svg class="a" style="left:502px;top:434px" width="39" height="48" viewBox="0 0 40 49"><use href="#doc" width="40" height="49"/></svg>
<svg class="a" style="left:622px;top:437px" width="48" height="44"><use href="#appw"/></svg>
<svg class="a" style="left:752px;top:434px" width="39" height="48" viewBox="0 0 40 49"><use href="#doc" width="40" height="49"/></svg>

<div class="a lbl t" style="left:333px;top:233px">Documents and Settings</div>
<div class="a lbl t" style="left:458px;top:233px">Program Files</div>
<div class="a lbl t" style="left:583px;top:233px;letter-spacing:-1.1px">RECYCLER</div>
<div class="a lbl" style="left:708px;top:233px">System Volume<br>Information</div>
<div class="a lbl t" style="left:333px;top:372px;letter-spacing:-0.7px">WINXP</div>
<div class="a lbl t" style="left:458px;top:372px;letter-spacing:-1px">AUTOEXEC</div>
<div class="a lbl t" style="left:583px;top:372px">boot</div>
<div class="a lbl t" style="left:708px;top:372px;letter-spacing:-0.7px">CONFIG</div>
<div class="a lbl t" style="left:333px;top:511px">IO</div>
<div class="a lbl t" style="left:458px;top:511px;letter-spacing:-0.8px">MSDOS</div>
<div class="a lbl t" style="left:583px;top:511px;letter-spacing:-1px">NTDETECT</div>
<div class="a lbl t" style="left:708px;top:511px">ntldr</div>

<div class="a" style="left:333px;top:566px;width:541px;height:1px;background:#FCFDF6"></div>
<!-- right scrollbar -->
<div class="a sb" style="left:874px;top:127px;height:440px;background:linear-gradient(90deg,#EEEDE5,#F7F6F1 50%,#F2F1EA)"></div>
<div class="a sbbtn" style="left:874px;top:128px"></div>
<svg class="a" style="left:877px;top:132px" width="10" height="7"><path d="M1 6 L5 2 L9 6" stroke="#4D6185" stroke-width="2.3" fill="none"/></svg>
<div class="a thumb" style="left:875px;top:144px;height:329px"></div>
<div class="a" style="left:878px;top:306px;width:7px;height:8px;background:repeating-linear-gradient(#8CB0F8 0,#8CB0F8 1px,#E5EDFD 1px,#E5EDFD 2px)"></div>
<div class="a sbbtn" style="left:874px;top:551px"></div>
<svg class="a" style="left:877px;top:555px" width="10" height="7"><path d="M1 1 L5 5 L9 1" stroke="#4D6185" stroke-width="2.3" fill="none"/></svg>

<!-- dropdown menu -->
<div class="a" style="left:418px;top:104px;width:101px;height:90px;background:#FCFCF9;border:1px solid #ACA899;box-shadow:2px 2px 2px rgba(0,0,0,0.3)"></div>
<div class="a" style="left:421px;top:106px;width:95px;height:17px;background:#316AC5"></div>
<div class="a" style="left:426px;top:111px;width:6px;height:6px;border-radius:50%;background:#fff"></div>
<div class="a t" style="left:437px;top:108px;color:#fff;letter-spacing:-0.1px">Miniatúry</div>
<div class="a t" style="left:437px;top:125px;letter-spacing:-0.25px">Dlaždice</div>
<div class="a t" style="left:437px;top:142px;letter-spacing:-0.25px">Ikony</div>
<div class="a t" style="left:437px;top:159px;letter-spacing:-0.25px">Zoznam</div>
<div class="a t" style="left:437px;top:176px;letter-spacing:-0.25px">Podrobnosti</div>
<svg class="a" style="left:485px;top:104px" width="8" height="12" viewBox="0 0 8 12"><path d="M0.5 0.5 L0.5 9 L2.4 7.3 L4 10.8 L5.6 10.1 L4.1 6.9 L6.6 6.9 Z" fill="#fff" stroke="#000" stroke-width="1" stroke-linejoin="miter"/></svg>

<!-- taskbar -->
<div id="taskbar" class="a"></div>
<div id="start" class="a"></div>
<svg class="a" style="left:10px;top:590px" width="20" height="18" viewBox="0 0 20 18">
 <path d="M3 2 Q6 0 10 1.5 L9 8 Q5.5 6.5 2 8 Z" fill="#F4622A"/>
 <path d="M10.5 1.8 Q14.5 3.5 19.5 1.5 L18.5 8 Q14 10 9.5 8.3 Z" fill="#6CBB2C"/>
 <path d="M2 8.8 Q5.5 7.3 9 8.8 L8 15.5 Q4.5 14 1 15.5 Z" fill="#3C8EE8"/>
 <path d="M9.3 9 Q14 10.8 18.3 8.8 L17.3 15.5 Q13 17.5 8.3 15.8 Z" fill="#F9C21E"/>
</svg>
<div class="a t" style="left:34px;top:589px;font-size:18px;letter-spacing:-0.4px;font-weight:bold;font-style:italic;color:#fff;text-shadow:1px 1px 1px #1A3A1A">štart</div>
<svg class="a" style="left:108px;top:590px" width="17" height="17" viewBox="0 0 17 17">
 <path d="M2 5 L5 3 L12 2 L14 4 L14 13 L5 15 L2 14 Z" fill="#3A8AE8"/>
 <ellipse cx="7" cy="9.5" rx="5.5" ry="5.8" fill="#F8F4C8"/>
 <rect x="5" y="5" width="8" height="9" fill="#D8ECFA" stroke="#2A6AD0" stroke-width="1.2"/>
 <path d="M11 6 L7 11" stroke="#2A6AD0" stroke-width="1.5"/>
 <circle cx="7" cy="11" r="1.1" fill="#101010"/>
 <circle cx="14.5" cy="7" r="1.5" fill="#F06020"/>
 <path d="M3 16 H12" stroke="#A08A60" stroke-width="1"/>
</svg>
<div class="a" style="left:135px;top:588px;width:160px;height:24px;border-radius:3px;background:#1E4FB5;box-shadow:inset 1px 1px 1px #0E2E80"></div>
<svg class="a" style="left:146px;top:595px" width="17" height="12" viewBox="0 0 17 12">
 <path d="M0.5 6 L4 2 L11 1 L16.5 4 L16.5 7 L12 11 L4 11 L0.5 9 Z" fill="#8C8C8C"/>
 <path d="M0.5 6 L4 2 L11 1 L16.5 4 L12 7.5 L4.5 8 Z" fill="#E8E8E8"/>
 <path d="M0.5 6 L4.5 8 L12 7.5 L16.5 4 L16.5 7 L12 11 L4 11 L0.5 9 Z" fill="#9A9A9A"/>
 <path d="M4.5 8 L12 7.5 L12 11 L4 11 Z" fill="#6A6A6A"/>
 <rect x="9" y="8.5" width="2" height="1.5" fill="#C8E8C8"/>
</svg>
<div class="a t" style="left:165px;top:594px;color:#fff;letter-spacing:-0.2px">Lokálny disk (C:)</div>
<div id="tray" class="a"></div>
<div class="a" style="left:854px;top:591px;width:13px;height:16px;background:#3B6BD0"></div>
<div class="a t" style="left:855px;top:593px;color:#fff;letter-spacing:-1px">SK</div>
<svg class="a" style="left:871px;top:590px" width="19" height="19" viewBox="0 0 19 19">
 <defs><radialGradient id="ta" cx="40%" cy="30%" r="70%"><stop offset="0" stop-color="#9BD2FF"/><stop offset="0.6" stop-color="#2C8BEA"/><stop offset="1" stop-color="#1660C8"/></radialGradient></defs>
 <circle cx="9.5" cy="9.5" r="9" fill="url(#ta)" stroke="#6E8FB8" stroke-width="1"/>
 <path d="M11 5 L7 9.5 L11 14" stroke="#fff" stroke-width="2.4" fill="none"/>
</svg>
<div class="a t" style="left:896px;top:593px;color:#fff">20:38</div>
</body></html>
